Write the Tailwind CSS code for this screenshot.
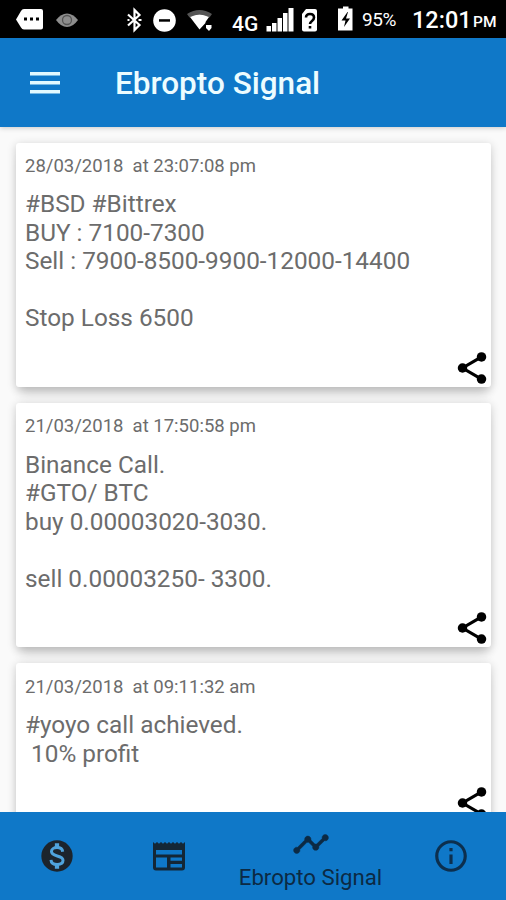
<!DOCTYPE html>
<html lang="en"><head><meta charset="utf-8"><title>Ebropto Signal</title>
<script src="https://cdn.jsdelivr.net/npm/@tailwindcss/browser@4"></script></head>
<body class="bg-white font-['Roboto',sans-serif]">
<div class="w-[506px] h-[900px] flex flex-col overflow-hidden">
  <!-- Status bar -->
  <div class="h-[38px] shrink-0 bg-black text-white flex items-start">
    <svg class="w-[232px] h-[38px]" viewBox="0 0 232 38">
      <path d="M16 19.500l5-8.500q1-2 3-2h17q2 0 2 2v16.500q0 2-2 2H24q-2 0-3-2z" fill="#fff"/>
      <path d="M24 17.500h3v3h-3zM30 17.500h3v3h-3zM36 17.500h3v3h-3z"/>
      <path d="M56 20q5-6.500 11-6.500t11 6.500q-5 7-11 7t-11-7z" fill="#8d8d8d"/>
      <circle cx="67" cy="20" r="4.500" fill="none" stroke="#555" stroke-width="1.300"/>
      <path d="M128 14.500l11.500 10.500-5 5V10l5 5-11.500 10.500" fill="none" stroke="#fff" stroke-width="2.200"/>
      <path d="M127.500 20h2M138.500 20h3" stroke="#fff" stroke-width="2.200"/>
      <circle cx="164.500" cy="20.500" r="11.300" fill="#fff"/><path d="M159 19.200h11v2.500h-11z"/>
      <path d="M187 14q12.500-8 25 0l-2.500 3.500q-10-6-20 0z" fill="#555"/>
      <path d="M190 17q9.500-5 19 0l-3.500 5v1l-6 6.500z" fill="#fff"/>
      <path d="M206 25h5.500v3l-2.500 3-3-3z" fill="#fff"/>
    </svg>
    <span class="w-[34px] pt-[11px] text-[21px] leading-[26px] font-medium">4G</span>
    <svg class="w-[92px] h-[38px]" viewBox="266 0 92 38">
      <path d="M266.500 26h4.500v5.500h-4.500zM272 23h4.500v8.500H272zM277.500 18h4.500v13.500h-4.500zM283 13h4.500v18.500H283zM288.500 8h5v23.500h-5z" fill="#fff"/>
      <path d="M306 9h9q2 0 2 2v18.500q0 2-2 2h-11q-2 0-2-2V14z" fill="#fff"/>
      <path d="M306 17.500q0-3.500 4-3.500t4 3.500q0 2-2 3.500t-2 3M310 26v2.500" fill="none" stroke="#000" stroke-width="2.600"/>
      <path d="M343 6.500h5.500V8.500h4v22h-14.500V8.500h5z" fill="#fff"/><path d="M347.500 12l-6 8.500h4l-1.500 6.500 6-8.500h-4l2-6.500z"/>
    </svg>
    <span class="w-[54px] pl-[4px] pt-[8px] text-[19px] leading-[24px] tracking-[-0.400px]">95%</span>
    <span class="w-[61px] pt-[6px] text-[23.500px] leading-[28px] font-medium">12:01</span>
    <span class="pt-[11px] text-[15.500px] leading-[22px] font-medium">PM</span>
  </div>
  <!-- App bar -->
  <header class="relative z-10 h-[89px] shrink-0 bg-[#0f78c8] flex items-center shadow-[0_1px_5px_rgba(0,0,0,0.2)]">
    <svg class="ml-[30px] w-[30px] h-[22px]" viewBox="0 0 30 22"><path d="M0 0h30v3.500H0zM0 9h30v3.500H0zM0 18h30v3.500H0z" fill="#e2f9ff"/></svg>
    <h1 class="ml-[55px] pt-[2px] text-[31.500px] font-medium text-[#ecfcff]">Ebropto Signal</h1>
  </header>
  <!-- Signals -->
  <main class="flex-1 min-h-0 overflow-hidden bg-[#fafafa] px-[15.500px] pt-[15.500px] flex flex-col gap-[15.500px] text-[#6c6c6c]">
    <article class="relative h-[244.500px] shrink-0 bg-white rounded-[3px] shadow-[0_2px_10px_rgba(0,0,0,0.2),0_12px_10px_-4px_rgba(0,0,0,0.12)] px-[9.500px] pt-[12px]">
      <p class="text-[18.500px] leading-[22px] whitespace-pre">28/03/2018  at 23:07:08 pm</p>
      <p class="mt-[13.500px] text-[24.350px] leading-[28.500px] whitespace-pre">#BSD #Bittrex
BUY : 7100-7300
Sell : 7900-8500-9900-12000-14400

Stop Loss 6500</p>
      <svg class="absolute right-0 bottom-0 w-[38px] h-[38px]" viewBox="0 0 24 24"><path d="M18 5L6 12l12 7" fill="none" stroke="#000" stroke-width="2"/><circle cx="18" cy="5" r="3"/><circle cx="6" cy="12" r="3"/><circle cx="18" cy="19" r="3"/></svg>
    </article>
    <article class="relative h-[244.500px] shrink-0 bg-white rounded-[3px] shadow-[0_2px_10px_rgba(0,0,0,0.2),0_12px_10px_-4px_rgba(0,0,0,0.12)] px-[9.500px] pt-[12.500px]">
      <p class="text-[18.500px] leading-[22px] whitespace-pre">21/03/2018  at 17:50:58 pm</p>
      <p class="mt-[13.500px] text-[24.350px] leading-[28.500px] whitespace-pre">Binance Call.
#GTO/ BTC
buy 0.00003020-3030.

sell 0.00003250- 3300.</p>
      <svg class="absolute right-0 bottom-0 w-[38px] h-[38px]" viewBox="0 0 24 24"><path d="M18 5L6 12l12 7" fill="none" stroke="#000" stroke-width="2"/><circle cx="18" cy="5" r="3"/><circle cx="6" cy="12" r="3"/><circle cx="18" cy="19" r="3"/></svg>
    </article>
    <article class="relative h-[159px] shrink-0 bg-white rounded-[3px] shadow-[0_2px_10px_rgba(0,0,0,0.2),0_12px_10px_-4px_rgba(0,0,0,0.12)] px-[9.500px] pt-[13px]">
      <p class="text-[18.500px] leading-[22px] whitespace-pre">21/03/2018  at 09:11:32 am</p>
      <p class="mt-[13.500px] text-[24.350px] leading-[28.500px] whitespace-pre">#yoyo call achieved.
 10% profit</p>
      <svg class="absolute right-0 bottom-0 w-[38px] h-[38px]" viewBox="0 0 24 24"><path d="M18 5L6 12l12 7" fill="none" stroke="#000" stroke-width="2"/><circle cx="18" cy="5" r="3"/><circle cx="6" cy="12" r="3"/><circle cx="18" cy="19" r="3"/></svg>
    </article>
  </main>
  <!-- Bottom navigation -->
  <nav class="relative h-[88px] shrink-0 bg-[#0f78c8] grid grid-cols-[113px_113px_169px_111px] justify-items-center text-[#0c2a44]">
    <svg class="mt-[25px] w-[38px] h-[38px]" viewBox="0 0 24 24"><circle cx="12" cy="12" r="9.900" fill="#1c242c"/><path d="M12 4v3M12 17v3" stroke="#4fa3dc" stroke-width="2.700"/><path d="M15.600 9.300C15.400 7.500 14 6.700 12 6.700s-3.500.900-3.500 2.500c0 3.600 7.300 1.900 7.300 5.500 0 1.700-1.600 2.600-3.700 2.600s-3.800-1-3.900-2.900" fill="none" stroke="#4fa3dc" stroke-width="1.900"/></svg>
    <svg class="mt-[30px] mr-[1px] w-[32px] h-[29px]" viewBox="0 0 32 29"><path fill="#142736" fill-rule="evenodd" d="M0 0l2 1.800L4 0l2 1.800L8 0l2 1.800L12 0l2 1.800L16 0l2 1.800L20 0l2 1.800L24 0l2 1.800L28 0l2 1.800L32 0v25.500q0 3-3 3H3q-3 0-3-3zM3 8v4.500h26V8zM3 15.500v10h11v-10zM17.500 15.500v3.200H29v-3.200zM17.500 22v3.500H29V22z"/></svg>
    <div class="flex flex-col items-center pt-[13px]">
      <svg class="w-[38px] h-[38px]" viewBox="0 0 24 24" fill="#0c2a44" stroke="#0c2a44" stroke-width=".3"><path d="M23 8c0 1.100-.9 2-2 2-.180 0-.350-.020-.510-.070l-3.560 3.550c.050.160.070.340.070.520 0 1.100-.9 2-2 2s-2-.9-2-2c0-.180.020-.360.070-.520l-2.550-2.550c-.160.050-.340.070-.520.070s-.360-.020-.520-.070l-4.550 4.560c.050.160.070.330.070.510 0 1.100-.9 2-2 2s-2-.9-2-2 .9-2 2-2c.180 0 .350.020.510.070l4.560-4.550C8.020 9.360 8 9.180 8 9c0-1.100.9-2 2-2s2 .9 2 2c0 .180-.020.360-.070.520l2.550 2.550c.160-.050.340-.070.520-.070s.360.020.520.070l3.550-3.560C19.020 8.350 19 8.180 19 8c0-1.100.9-2 2-2s2 .9 2 2z"/></svg>
      <span class="text-[22.200px] leading-[28px]">Ebropto Signal</span>
    </div>
    <svg class="mt-[25px] w-[38px] h-[38px]" viewBox="0 0 24 24" fill="#0c2f4e"><path d="M11 7h2v2h-2zm0 4h2v6h-2zm1-9C6.480 2 2 6.480 2 12s4.480 10 10 10 10-4.480 10-10S17.520 2 12 2zm0 18c-4.410 0-8-3.590-8-8s3.590-8 8-8 8 3.590 8 8-3.590 8-8 8z"/></svg>
  </nav>
</div>
</body></html>
